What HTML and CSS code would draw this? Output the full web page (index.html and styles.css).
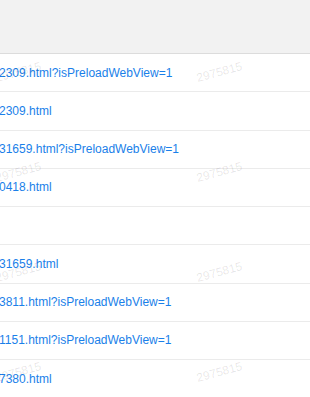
FILE: index.html
```html
<!DOCTYPE html>
<html lang="en">
<head>
<meta charset="utf-8">
<title>List</title>
<link rel="stylesheet" href="styles.css">
</head>
<body>
<div class="page">
  <header class="topbar"></header>
  <ul class="list">
    <li class="row"><a class="link">2309.html?isPreloadWebView=1</a></li>
    <li class="row"><a class="link">2309.html</a></li>
    <li class="row"><a class="link">31659.html?isPreloadWebView=1</a></li>
    <li class="row"><a class="link">0418.html</a></li>
    <li class="row"></li>
    <li class="row"><a class="link">31659.html</a></li>
    <li class="row"><a class="link">3811.html?isPreloadWebView=1</a></li>
    <li class="row"><a class="link">1151.html?isPreloadWebView=1</a></li>
    <li class="row"><a class="link">7380.html</a></li>
  </ul>
  <div class="watermarks" aria-hidden="true">
    <span class="wm" style="left:-5px;top:65px">2975815</span>
    <span class="wm" style="left:196px;top:65px">2975815</span>
    <span class="wm" style="left:-5px;top:165px">2975815</span>
    <span class="wm" style="left:196px;top:165px">2975815</span>
    <span class="wm" style="left:-5px;top:265px">2975815</span>
    <span class="wm" style="left:196px;top:265px">2975815</span>
    <span class="wm" style="left:-5px;top:365px">2975815</span>
    <span class="wm" style="left:196px;top:365px">2975815</span>
  </div>
</div>
</body>
</html>
```

FILE: styles.css
```css
html, body {
  margin: 0;
  padding: 0;
  background: #ffffff;
}

body {
  font-family: "Liberation Sans", Arial, sans-serif;
  font-size: 12px;
  overflow: hidden;
}

.page {
  position: relative;
  width: 310px;
  height: 397px;
  overflow: hidden;
}

.topbar {
  height: 53px;
  background: #f2f2f2;
  border-bottom: 1px solid #dcdcdc;
}

.list {
  list-style: none;
  margin: 0;
  padding: 0;
}

.row {
  height: 37.25px;
  border-bottom: 1px solid #ebebeb;
  display: flex;
  align-items: center;
  background: #ffffff;
}

.link {
  color: #1a7fe9;
  white-space: nowrap;
  margin-left: -1px;
  line-height: 14px;
}

.watermarks {
  position: absolute;
  inset: 0;
  pointer-events: none;
}

.wm {
  position: absolute;
  font-size: 12px;
  line-height: 14px;
  color: rgba(0, 0, 0, 0.1);
  transform: rotate(-15deg);
  white-space: nowrap;
}
```
